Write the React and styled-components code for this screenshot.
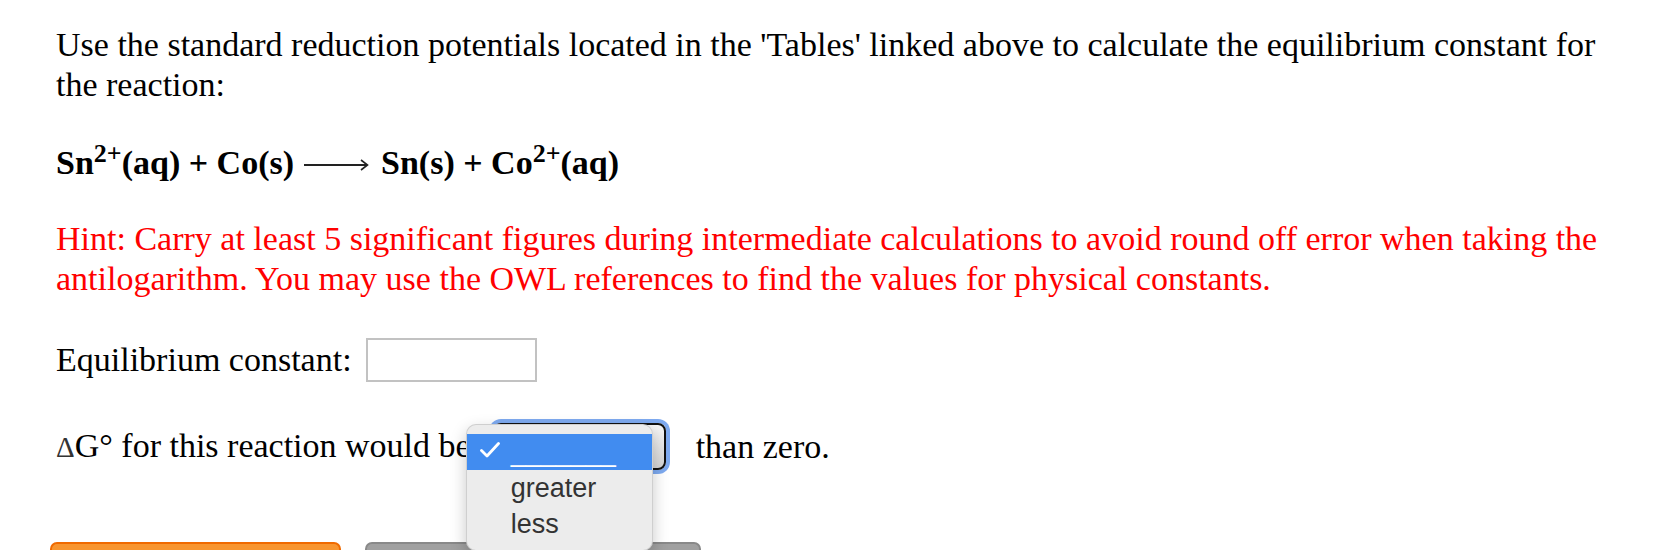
import React from 'react';
import styled, { createGlobalStyle } from 'styled-components';

const GlobalStyle = createGlobalStyle`
  html, body {
    margin: 0;
    padding: 0;
    background: #fff;
  }
  body {
    font-family: "Liberation Serif", "Times New Roman", serif;
    color: #000;
    overflow: hidden;
  }
`;

const Page = styled.div`
  padding: 25px 56px 0 56px;
  font-size: 34px;
  line-height: 40px;
`;

const Para = styled.p`
  margin: ${(p) => p.$top || 0}px 0 0 0;
  color: ${(p) => (p.$hint ? '#ff0000' : '#000')};
`;

const Equation = styled.div`
  margin-top: 38px;
  font-weight: bold;
  display: flex;
  align-items: baseline;
`;

const Sup = styled.sup`
  font-size: 26px;
  line-height: 0;
  vertical-align: 12px;
`;

const Arrow = styled.svg`
  align-self: center;
  margin: 4px 12px 0 10px;
`;

const FieldRow = styled.div`
  margin-top: 39px;
  display: flex;
  align-items: center;
  height: 44px;
`;

const Input = styled.input`
  box-sizing: border-box;
  width: 171px;
  height: 44px;
  margin-left: 14px;
  border: 2px solid #c2c2c2;
  background: #fff;
  outline: none;
`;

const ChoiceRow = styled.div`
  margin-top: 41px;
  display: flex;
  align-items: center;
  height: 47px;
`;

const Delta = styled.span`
  font-size: 29px;
  color: #333;
`;

const SelectBox = styled.div`
  position: relative;
  box-sizing: border-box;
  width: 173px;
  height: 47px;
  margin-left: 22px;
  border: 2px solid #111;
  border-radius: 8px;
  background: linear-gradient(#f6f6f6, #d4d4d4);
  box-shadow: 0 0 0 4px #7eaaf0;
`;

const Menu = styled.div`
  position: absolute;
  left: -29px;
  top: -1px;
  width: 187px;
  height: 127px;
  box-sizing: border-box;
  padding-top: 9px;
  background: #ececec;
  border: 1px solid rgba(0, 0, 0, 0.12);
  border-radius: 10px;
  box-shadow: 0 6px 16px rgba(0, 0, 0, 0.22);
  overflow: hidden;
  font-family: "Liberation Sans", Arial, sans-serif;
  font-size: 27px;
`;

const Item = styled.div`
  display: flex;
  align-items: center;
  height: 36px;
  line-height: 36px;
  padding-left: 13px;
  background: ${(p) => (p.$selected ? '#418cf0' : 'transparent')};
  color: ${(p) => (p.$selected ? '#fff' : '#333')};
`;

const CheckSlot = styled.span`
  display: flex;
  align-items: center;
  width: 31px;
  height: 36px;
  margin-top: -5px;
`;

const After = styled.span`
  margin-left: 30px;
`;

const ButtonBar = styled.div`
  margin: 72px 0 0 -6px;
  display: flex;
  gap: 24px;
`;

const Button = styled.button`
  box-sizing: border-box;
  width: ${(p) => p.$w}px;
  height: 56px;
  border-radius: 7px;
  border: 2px solid ${(p) => (p.$primary ? '#f06a00' : '#898989')};
  background: ${(p) => (p.$primary ? '#f8952f' : '#a0a0a0')};
`;

const Check = () => (
  <svg width="20" height="16" viewBox="0 0 20 16">
    <polyline points="1.5,8.5 7,14 18.5,1.5" fill="none" stroke="#fff" strokeWidth="2.8" strokeLinecap="round" strokeLinejoin="round" />
  </svg>
);

export default function App() {
  return (
    <>
      <GlobalStyle />
      <Page>
        <Para>
          Use the standard reduction potentials located in the 'Tables' linked above to calculate the equilibrium constant for the reaction:
        </Para>
        <Equation>
          <span>Sn<Sup>2+</Sup>(aq) + Co(s)</span>
          <Arrow width="65" height="16" viewBox="0 0 65 16">
            <line x1="0" y1="8" x2="63" y2="8" stroke="#222" strokeWidth="1.8" />
            <polyline points="57,3 63.5,8 57,13" fill="none" stroke="#222" strokeWidth="1.6" />
          </Arrow>
          <span>Sn(s) + Co<Sup>2+</Sup>(aq)</span>
        </Equation>
        <Para $hint $top={36}>
          Hint: Carry at least 5 significant figures during intermediate calculations to avoid round off error when taking the antilogarithm. You may use the OWL references to find the values for physical constants.
        </Para>
        <FieldRow>
          <span>Equilibrium constant:</span>
          <Input type="text" />
        </FieldRow>
        <ChoiceRow>
          <span><Delta>Δ</Delta>G° for this reaction would be</span>
          <SelectBox>
            <Menu>
              <Item $selected>
                <CheckSlot><Check /></CheckSlot>
                <span>_______</span>
              </Item>
              <Item>
                <CheckSlot />
                <span>greater</span>
              </Item>
              <Item>
                <CheckSlot />
                <span>less</span>
              </Item>
            </Menu>
          </SelectBox>
          <After>than zero.</After>
        </ChoiceRow>
        <ButtonBar>
          <Button $primary $w={291} aria-label="Submit Answer" />
          <Button $w={336} aria-label="Try Another Version" />
        </ButtonBar>
      </Page>
    </>
  );
}
